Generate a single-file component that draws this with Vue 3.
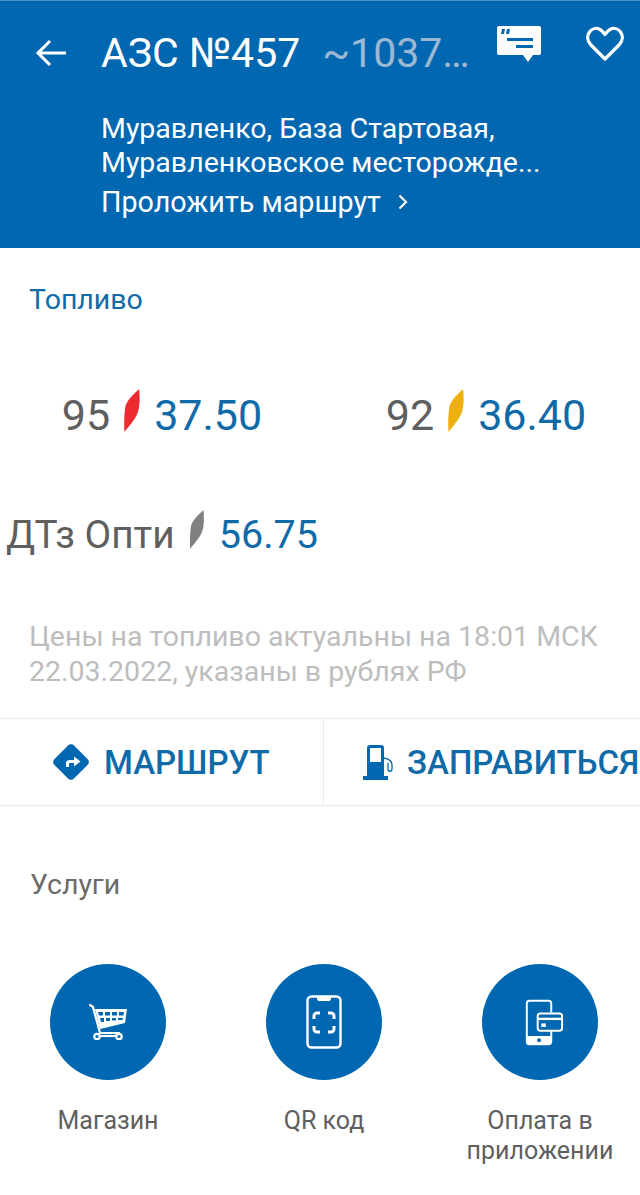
<template>
  <div class="station">
    <header class="station-head">
      <div class="station-head__bar">
        <button class="icon-btn icon-btn--back" type="button" aria-label="Назад">
          <svg width="32" height="28" viewBox="0 0 32 28" fill="none" stroke="#fff" stroke-width="3">
            <path d="M31 14H3M15 2 3 14l12 12" />
          </svg>
        </button>
        <h1 class="station-head__title">АЗС №457</h1>
        <span class="station-head__distance">~1037…</span>
        <svg class="station-head__review" width="44" height="37" viewBox="0 0 44 37">
          <path fill="#fff" d="M2 0h40a2 2 0 0 1 2 2v25a2 2 0 0 1-2 2h-6l-5 7-5-7H2a2 2 0 0 1-2-2V2a2 2 0 0 1 2-2z" />
          <path fill="#0067b0" d="M5 3h3l-1 5H4zM10 3h3l-1 5H9zM10 12h26v3H10zM19 19h17v3H19z" />
        </svg>
        <svg class="station-head__fav" width="38" height="36" viewBox="0 0 38 36" fill="none" stroke="#fff" stroke-width="3.2" stroke-linejoin="round">
          <path d="M19 33 4.500 18.500C-3 9.500 6 -1 14 3.500c2.200 1.200 4 3.500 5 5 1-1.500 2.800-3.800 5-5C32-1 41 9.500 33.500 18.500z" />
        </svg>
      </div>
      <p class="station-head__address">Муравленко, База Стартовая,<br />Муравленковское месторожде...</p>
      <a class="station-head__route">Проложить маршрут
        <svg width="10" height="16" viewBox="0 0 10 16" fill="none" stroke="#fff" stroke-width="2.200">
          <path d="m1.500 1.500 6.500 6.500-6.500 6.500" />
        </svg>
      </a>
    </header>

    <section class="fuel">
      <h2 class="fuel__title">Топливо</h2>
      <div class="fuel__grid">
        <div
          v-for="item in fuels" :key="item.name"
          class="fuel-item"
          :class="{ 'fuel-item--small': item.small }"
        >
          <span class="fuel-item__name">{{ item.name }}</span>
          <svg class="fuel-item__leaf" viewBox="0 0 16 43">
            <path :fill="item.color" d="M15 0c1 8 1 16-1 23-3 8-9 14-13.500 20C0 35 0 25 1.500 17 4 10 10 5 15 0z" />
          </svg>
          <span class="fuel-item__price">{{ item.price }}</span>
        </div>
      </div>
      <p class="fuel__note">Цены на топливо актуальны на 18:01 МСК<br />22.03.2022, указаны в рублях РФ</p>
    </section>

    <div class="actions">
      <button class="actions__btn actions__btn--route" type="button">
        <svg width="36" height="36" viewBox="0 0 36 36">
          <path fill="#0067b0" d="M15 1.500 1.500 15a4 4 0 0 0 0 6L15 34.500a4 4 0 0 0 6 0L34.500 21a4 4 0 0 0 0-6L21 1.500a4 4 0 0 0-6 0z" />
          <path fill="none" stroke="#fff" stroke-width="3" d="M14.500 23v-3.500a2 2 0 0 1 2-2H22" />
          <path fill="#fff" d="M21 12.500v10l6.500-5z" />
        </svg>
        <span>МАРШРУТ</span>
      </button>
      <button class="actions__btn actions__btn--fill" type="button">
        <svg width="30" height="35" viewBox="0 0 30 35">
          <path fill="#0067b0" d="M7 0h11a3 3 0 0 1 3 3v28h4v4H0v-4h4V3a3 3 0 0 1 3-3z" />
          <path fill="#fff" d="M7 3h11v14H7z" />
          <path fill="none" stroke="#0067b0" stroke-width="1.300" d="M21 13c5 1 8 3 8 7v4c0 3-4 3-4 0v-6" />
        </svg>
        <span>ЗАПРАВИТЬСЯ</span>
      </button>
    </div>

    <section class="services">
      <h2 class="services__title">Услуги</h2>
      <div class="services__grid">
        <div class="service">
          <div class="service__circle">
            <svg width="38" height="36" viewBox="0 0 38 36" fill="none" stroke="#fff" stroke-width="2.200">
              <path stroke-linecap="round" d="M1 1 4 3l7 26h19" />
              <path fill="#fff" stroke="none" d="M6 5h32l-2 14-25 6z" />
              <path fill="#0067b0" stroke="none" d="M9 8h5v3.500H10zM16 8h5v3.500h-5zM23 8h5v3.500h-5zM30 8h5l-.5 3.500H30zM11 14h4v4h-3zM17 14h4v3h-4zM23 14h4v2.500h-4zM29 14h5l-.5 2h-4.500z" />
              <path d="M10 32h18" />
              <circle cx="8" cy="32.500" r="2.700" />
              <circle cx="30" cy="32.500" r="2.700" />
            </svg>
          </div>
          <span class="service__label">Магазин</span>
        </div>
        <div class="service">
          <div class="service__circle">
            <svg width="36" height="54" viewBox="0 0 36 54" fill="none" stroke="#fff" stroke-width="2.400">
              <rect x="1.500" y="1.500" width="33" height="51" rx="4" />
              <path fill="#fff" stroke="none" d="M11 2h14v2a2 2 0 0 1-2 2H13a2 2 0 0 1-2-2z" />
              <path stroke-width="3" d="M8 24v-3a3 3 0 0 1 3-3h3M22 18h3a3 3 0 0 1 3 3v3M28 31v3a3 3 0 0 1-3 3h-3M14 37h-3a3 3 0 0 1-3-3v-3" />
            </svg>
          </div>
          <span class="service__label">QR код</span>
        </div>
        <div class="service">
          <div class="service__circle">
            <svg class="service__icon--pay" width="38" height="47" viewBox="0 0 42 50" fill="none" stroke="#fff" stroke-width="2.200">
              <path d="M29 14V4a3 3 0 0 0-3-3H5a3 3 0 0 0-3 3v42a3 3 0 0 0 3 3h21a3 3 0 0 0 3-3V34" />
              <path fill="#fff" stroke="none" d="M2 40h27v6a3 3 0 0 1-3 3H5a3 3 0 0 1-3-3z" />
              <circle cx="15.500" cy="44.500" r="2.200" fill="#0067b0" stroke="none" />
              <rect x="14" y="15" width="27" height="19" rx="3" />
              <path stroke-width="2.600" d="M14 21h27" />
              <path fill="#fff" stroke="none" d="M18 26h5v4h-5z" />
            </svg>
          </div>
          <span class="service__label">Оплата в<br />приложении</span>
        </div>
      </div>
    </section>
  </div>
</template>

<script setup>
const fuels = [
  { name: '95', price: '37.50', color: '#ee2a30' },
  { name: '92', price: '36.40', color: '#eeb00f' },
  { name: 'ДТз Опти', price: '56.75', color: '#808080', small: true },
]
</script>

<style>
html,
body {
  margin: 0;
  background: #fff;
}
</style>

<style scoped>
.station {
  width: 640px;
  height: 1195px;
  overflow: hidden;
  background: #fff;
  font-family: Roboto, "Noto Sans", sans-serif;
}

.station-head {
  box-sizing: border-box;
  height: 248px;
  padding: 0 0 0 101px;
  background: #0067b0;
  border-top: 1px solid #4f93c6;
  color: #fff;
}

.station-head__bar {
  position: relative;
  display: flex;
  align-items: baseline;
  height: 111px;
}

.icon-btn {
  position: absolute;
  top: 38px;
  left: -66px;
  padding: 0;
  background: none;
  border: none;
  line-height: 0;
}

.station-head__title {
  margin: 0;
  font-size: 41px;
  font-weight: 400;
  line-height: 104px;
}

.station-head__distance {
  margin-left: 22px;
  font-size: 41px;
  color: #9db8d2;
}

.station-head__review {
  position: absolute;
  top: 25px;
  left: 396px;
}

.station-head__fav {
  position: absolute;
  top: 25px;
  left: 485px;
}

.station-head__address {
  margin: 0;
  font-size: 28.500px;
  line-height: 34px;
}

.station-head__route {
  display: flex;
  align-items: center;
  gap: 17px;
  margin-top: 5px;
  font-size: 28.700px;
  line-height: 34px;
}

.fuel {
  height: 470px;
}

.fuel__title {
  margin: 0;
  padding: 34px 0 0 29px;
  font-size: 28.500px;
  font-weight: 400;
  line-height: 36px;
  color: #0f6aa8;
}

.fuel__grid {
  display: grid;
  grid-template-columns: 324px 324px;
  row-gap: 61px;
  margin-top: 68px;
}

.fuel-item {
  display: flex;
  align-items: center;
  justify-content: center;
  gap: 14px;
  height: 58px;
  font-size: 43px;
  white-space: nowrap;
}

.fuel-item--small {
  font-size: 38.800px;
}

.fuel-item--small .fuel-item__price {
  font-size: 39.600px;
}

.fuel-item__name {
  color: #5f5f5f;
}

.fuel-item__leaf {
  flex: none;
  width: 16px;
  height: 43px;
  margin-top: -9px;
}

.fuel-item--small .fuel-item__leaf {
  height: 39px;
}

.fuel-item__price {
  color: #0f6aa8;
}

.fuel__note {
  margin: 56px 0 0 29px;
  font-size: 28.500px;
  line-height: 35px;
  color: #bdbdbd;
}

.actions {
  display: grid;
  grid-template-columns: 324px 316px;
  height: 88px;
  box-sizing: border-box;
  border-top: 1px solid #ececec;
  border-bottom: 1px solid #ececec;
}

.actions__btn {
  display: flex;
  align-items: center;
  gap: 14px;
  padding: 0;
  background: none;
  border: none;
  font-family: inherit;
  font-size: 33px;
  font-weight: 500;
  color: #0f6aa8;
  white-space: nowrap;
  overflow: hidden;
}

.actions__btn svg {
  flex: none;
}

.actions__btn--route {
  gap: 15px;
  padding-left: 53px;
  border-right: 1px solid #ececec;
}

.actions__btn--fill {
  padding-left: 39px;
}

.services__title {
  margin: 0;
  padding: 61px 0 0 30px;
  font-size: 28.500px;
  font-weight: 400;
  line-height: 36px;
  color: #6b6b6b;
}

.services__grid {
  display: grid;
  grid-template-columns: repeat(3, 216px);
  margin-top: 61px;
}

.service {
  display: flex;
  flex-direction: column;
  align-items: center;
}

.service__circle {
  display: flex;
  align-items: center;
  justify-content: center;
  width: 116px;
  height: 116px;
  border-radius: 50%;
  background: #0067b0;
}

.service__icon--pay {
  margin-left: 8px;
}

.service__label {
  margin-top: 26px;
  font-size: 25px;
  line-height: 30px;
  text-align: center;
  color: #5f5f5f;
}
</style>
